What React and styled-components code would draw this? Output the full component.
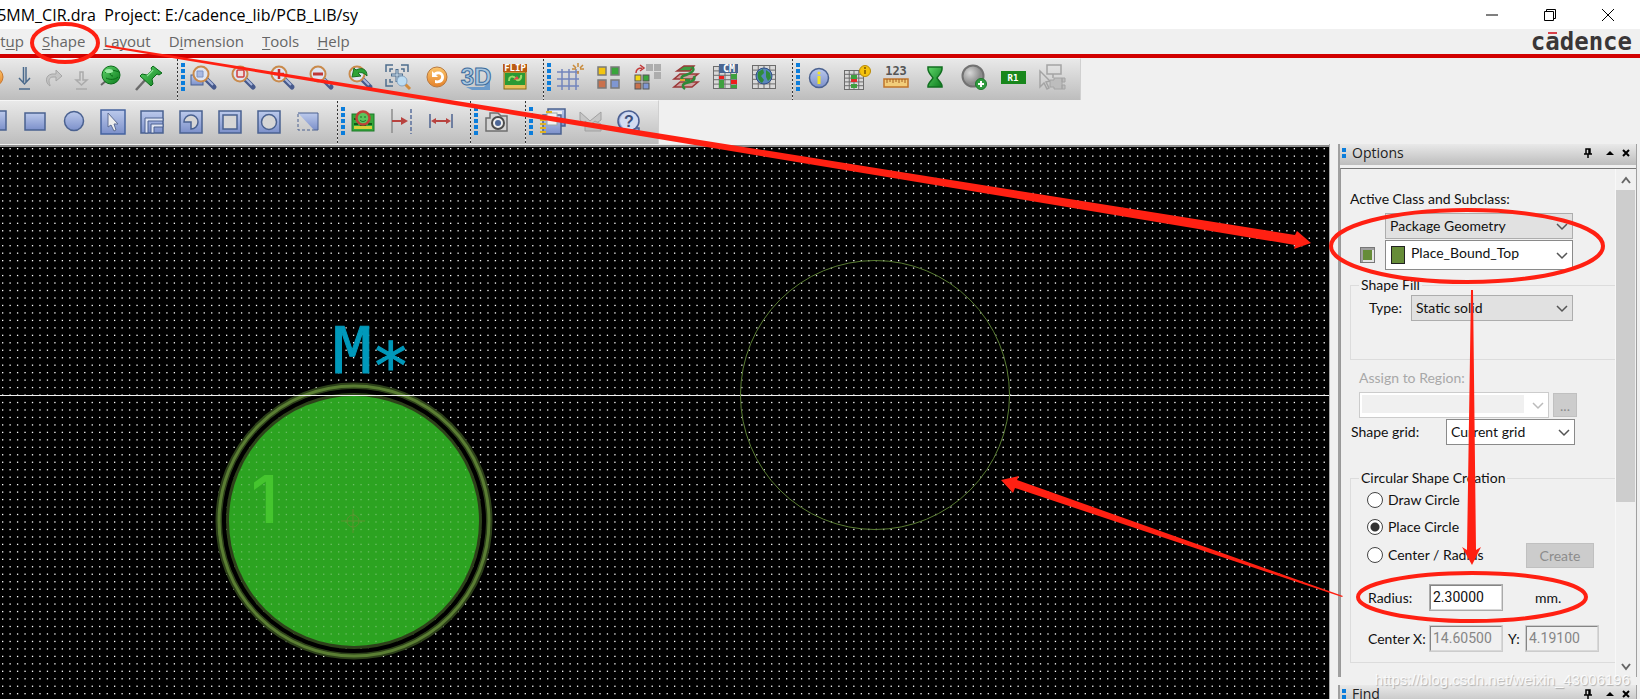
import styled, { createGlobalStyle, css } from 'styled-components'

const colors = {
  face: '#f0f0f0',
  mark: '#ff2012',
  brand: '#d20000',
  grip: '#0b7ddb',
  steel: '#4a6190',
  olive: '#668c38',
  line: '#adadad',
}

const barGradient = 'linear-gradient(to bottom, #e9e9e9, #bdbdbd)'

const GlobalStyle = createGlobalStyle`
  * {
    box-sizing: border-box;
  }
  body {
    margin: 0;
    background: ${colors.face};
    font-family: 'Lato', 'Liberation Sans', sans-serif;
    font-size: 14px;
    color: #111;
  }
  button, input, select {
    font: inherit;
    color: inherit;
  }
`

const Page = styled.div`
  position: relative;
  display: flex;
  flex-direction: column;
  height: 100vh;
  overflow: hidden;
`

/* ---------- title and menu ---------- */

const TitleBar = styled.header`
  display: flex;
  flex: none;
  align-items: center;
  justify-content: space-between;
  height: 29px;
  background: white;
`

const Title = styled.h1`
  display: flex;
  justify-content: flex-end;
  width: 358px;
  margin: 0;
  overflow: hidden;
  font-family: 'Open Sans', 'Noto Sans', sans-serif;
  font-size: 16px;
  font-weight: 400;
  line-height: 28px;
  white-space: pre;
  color: black;
`

const WindowButtons = styled.div`
  display: flex;
  padding-right: 3px;
`

const WindowButton = styled.button`
  display: grid;
  place-items: center;
  width: 58px;
  height: 28px;
  padding: 0;
  border: 0;
  background: none;
`

const MenuBar = styled.nav`
  display: flex;
  flex: none;
  align-items: center;
  height: 29px;
  padding-right: 8px;
  border-bottom: 4px solid ${colors.brand};
  background: ${colors.face};
`

const MenuItem = styled.button`
  display: flex;
  justify-content: flex-end;
  width: ${({ $width }) => ($width ? `${$width}px` : 'auto')};
  margin: 0 18px 0 0;
  padding: 0 0 2px;
  overflow: hidden;
  border: 0;
  background: none;
  font-family: 'Open Sans', 'Noto Sans', sans-serif;
  font-size: 15px;
  line-height: 22px;
  color: #666;
  u {
    text-underline-offset: 2px;
  }
`

const Logo = styled.div`
  margin-left: auto;
  font-family: 'DejaVu Sans Mono', monospace;
  font-size: 24px;
  font-weight: bold;
  line-height: 24px;
  color: #3a3637;
`

const Barred = styled.span`
  position: relative;
  &::before {
    content: '';
    position: absolute;
    top: 4px;
    left: 3px;
    width: 9px;
    height: 2px;
    background: #d8414a;
  }
`

/* ---------- toolbars ---------- */

const ToolRow = styled.div`
  display: flex;
  flex: none;
  align-self: flex-start;
  align-items: stretch;
  height: ${({ $height }) => $height}px;
  border-top: 1px solid #f6f6f6;
  border-right: 1px solid #d0d0d0;
  background: ${barGradient};
`

const ToolSection = styled.div`
  display: flex;
  align-items: center;
  gap: 13px;
  padding-right: ${({ $lift }) => ($lift ? 15 : 16)}px;
  padding-bottom: ${({ $lift }) => ($lift ? 6 : 2)}px;
`

const TightTools = styled.div`
  display: flex;
  gap: 2px;
  margin-right: -10px;
  padding-right: 0;
`

const Divider = styled.div`
  align-self: stretch;
  width: 2px;
  margin-right: 2px;
  background: repeating-linear-gradient(to bottom, #333 0 2px, #ddd 2px 4px) 0 0 / 1px 100% no-repeat;
`

const Grip = styled.div`
  align-self: flex-start;
  width: 4px;
  height: 30px;
  margin: ${({ $top }) => $top}px 5px 0 0;
  background: repeating-linear-gradient(to bottom, ${colors.grip} 0 4px, transparent 4px 6px);
`

const Tool = styled.button`
  display: flex;
  justify-content: flex-end;
  width: ${({ $width }) => $width || 26}px;
  height: 26px;
  padding: 0;
  overflow: ${({ $width }) => ($width ? 'hidden' : 'visible')};
  border: 0;
  background: none;
  svg {
    flex: none;
    overflow: visible;
  }
`

/* ---------- work area ---------- */

const Workspace = styled.main`
  display: flex;
  flex: 1;
  min-height: 0;
`

const Board = styled.section`
  flex: 1;
  min-width: 0;
  margin-top: 1px;
  border-top: 2px solid #8c8c8c;
  background: black;
  svg {
    display: block;
    width: 100%;
    height: 100%;
  }
`

const Dock = styled.aside`
  display: flex;
  flex: none;
  flex-direction: column;
  gap: 8px;
  width: 311px;
  padding: 0 3px 0 8px;
  border-left: 1px solid #aaa;
`

const Panel = styled.section`
  display: flex;
  flex: 1;
  flex-direction: column;
  gap: 3px;
  min-height: 0;
  border-left: 2px solid #a0a0a0;
  border-right: 1px solid #a0a0a0;
`

const ClosedPanel = styled(Panel)`
  flex: none;
  height: 14px;
  overflow: hidden;
`

const PanelHeader = styled.header`
  display: flex;
  flex: none;
  align-items: center;
  gap: 6px;
  height: 21px;
  padding: 0 5px 3px 2px;
  background: ${barGradient};
`

const PanelGrip = styled.div`
  width: 4px;
  height: 10px;
  background: repeating-linear-gradient(to bottom, ${colors.grip} 0 4px, transparent 4px 6px);
`

const PanelTitle = styled.h2`
  flex: 1;
  margin: 0;
  font-family: 'Open Sans', 'Noto Sans', sans-serif;
  font-size: 14px;
  font-weight: 400;
  line-height: 16px;
  color: #222;
`

const PanelButton = styled.button`
  display: grid;
  place-items: center;
  width: 10px;
  height: 16px;
  margin-left: ${({ $gap }) => $gap || 0}px;
  padding: 0;
  border: 0;
  background: none;
`

const PanelBody = styled.div`
  display: flex;
  flex: 1;
  min-height: 0;
  border-top: 1px solid #777;
  border-left: 1px solid #999;
`

const Form = styled.form`
  display: flex;
  flex: 1;
  flex-direction: column;
  min-width: 0;
  padding: 21px 0 0 9px;
  overflow: hidden;
`

const Scrollbar = styled.div`
  display: flex;
  flex: none;
  flex-direction: column;
  width: 21px;
  padding-right: 1px;
  border-left: 1px solid #f8f8f8;
`

const ScrollButton = styled.button`
  display: grid;
  place-items: center;
  height: 21px;
  padding: 0;
  border: 0;
  background: none;
`

const ScrollTrack = styled.div`
  flex: 1;
`

const ScrollThumb = styled.div`
  height: 67%;
  background: #cdcdcd;
`

const Row = styled.div`
  display: flex;
  align-items: center;
  margin: ${({ $top }) => $top || 0}px 0 0 ${({ $indent }) => $indent || 0}px;
`

const Label = styled.label`
  flex: none;
  width: ${({ $width }) => ($width ? `${$width}px` : 'auto')};
  line-height: 18px;
  white-space: nowrap;
  color: ${({ $muted }) => ($muted ? '#a8a8a8' : '#111')};
`

const SelectBox = styled.div`
  position: relative;
  width: ${({ $width }) => $width}px;
`

const Chevron = styled.svg`
  position: absolute;
  top: 50%;
  right: 5px;
  width: 12px;
  height: 8px;
  margin-top: -3px;
  pointer-events: none;
`

const Swatch = styled.span`
  position: absolute;
  top: 6px;
  left: 6px;
  width: 14px;
  height: 18px;
  border: 1px solid #222;
  background: ${colors.olive};
`

const Select = styled.select`
  appearance: none;
  display: block;
  width: 100%;
  height: ${({ $tall }) => ($tall ? 30 : 26)}px;
  padding: ${({ $tall }) => ($tall ? '0 20px 5px 25px' : '0 20px 1px 4px')};
  border: 1px solid ${colors.line};
  border-radius: 0;
  background: #e1e1e1;
  ${({ $white }) =>
    $white &&
    css`
      border-color: #8a8a8a;
      background: white;
    `}
  &:disabled {
    border: 1px solid #ccc;
    background: linear-gradient(${colors.face}, ${colors.face}) 2px 2px / 162px 18px no-repeat white;
    opacity: 1;
  }
`

const LayerButton = styled.button`
  width: 15px;
  height: 16px;
  margin-right: 10px;
  padding: 0;
  border: 1px solid #777;
  background: ${colors.olive};
  box-shadow: inset 2px 2px #a0a0a0, inset -2px -2px #e4e4e4;
`

const Group = styled.fieldset`
  display: flex;
  flex-direction: column;
  min-width: 0;
  height: ${({ $height }) => $height}px;
  margin: ${({ $top }) => $top}px 0 0 0;
  padding: 0 0 0 8px;
  border: 1px solid #dcdcdc;
  border-right: 0;
`

const Legend = styled.legend`
  padding: 0 2px;
  line-height: 18px;
`

const RadioRow = styled(Row)`
  height: 20px;
`

const Radio = styled.input`
  appearance: none;
  width: 16px;
  height: 16px;
  margin: 0 5px 0 8px;
  border: 1px solid #444;
  border-radius: 50%;
  background: white;
  &:checked {
    background: radial-gradient(circle, #333 0 4px, white 5px);
  }
`

const GreyButton = styled.button`
  width: ${({ $width }) => $width}px;
  height: ${({ $width }) => ($width > 30 ? 25 : 24)}px;
  margin-left: ${({ $auto }) => ($auto ? 'auto' : '4px')};
  margin-right: ${({ $auto }) => ($auto ? '21px' : '0')};
  padding: 0;
  border: 1px solid #c0c0c0;
  background: #cccccc;
  &:disabled {
    color: #8c8c8c;
  }
`

const NumberBox = styled.input`
  width: 74px;
  height: 27px;
  padding: 0 0 1px 2px;
  border: 2px solid #a0a0a0;
  border-color: #858585 #d8d8d8 #d8d8d8 #858585;
  background: white;
  box-shadow: 0 0 0 1px ${colors.face};
  outline: 1px solid #aaa;
  outline-offset: -1px;
  font-family: 'Roboto', 'Liberation Sans', sans-serif;
  &:disabled {
    outline-color: #ccc;
    background: ${colors.face};
    color: #868686;
  }
`

/* ---------- layers over the window ---------- */

const MarkLayer = styled.svg`
  position: absolute;
  top: 0;
  left: 0;
  width: 100%;
  height: 100%;
  pointer-events: none;
`

const Watermark = styled.div`
  position: absolute;
  right: 10px;
  bottom: 9px;
  font-family: 'Liberation Sans', sans-serif;
  font-size: 15px;
  line-height: 20px;
  color: rgba(255, 255, 255, 0.85);
  text-shadow: 1px 1px 1px rgba(0, 0, 0, 0.25);
  pointer-events: none;
`

/* ---------- icons ---------- */

const Gradients = () => (
  <svg width="0" height="0" style={{ position: 'absolute' }} aria-hidden="true">
    <defs>
      <linearGradient id="blue" x1="0" y1="0" x2="0" y2="1">
        <stop offset="0" stopColor="#bccaec" />
        <stop offset="1" stopColor="#7c90ca" />
      </linearGradient>
      <linearGradient id="green" x1="0" y1="0" x2="1" y2="1">
        <stop offset="0" stopColor="#5fd66a" />
        <stop offset="1" stopColor="#0b7a1c" />
      </linearGradient>
      <linearGradient id="orange" x1="0" y1="0" x2="0" y2="1">
        <stop offset="0" stopColor="#fbc66c" />
        <stop offset="1" stopColor="#e5822a" />
      </linearGradient>
      <radialGradient id="silver" cx="0.35" cy="0.35">
        <stop offset="0" stopColor="#d8d8d8" />
        <stop offset="1" stopColor="#8d8d8d" />
      </radialGradient>
    </defs>
  </svg>
)

const box = { fill: 'url(#blue)', stroke: colors.steel, strokeWidth: 1.5 }
const hollow = { fill: '#d6d6d6', stroke: colors.steel, strokeWidth: 1.5 }

const Lens = ({ children, back }) => (
  <>
    {back}
    <path d="M17 16l7 7" stroke="#46598c" strokeWidth="5" strokeLinecap="round" />
    <path d="M17 15l6 6" stroke="#a9b7dc" strokeWidth="2" />
    <circle cx="11" cy="10" r="7.5" fill="#dfe5f2" stroke="#c98a4b" strokeWidth="2" />
    {children}
  </>
)

const TableGrid = ({ x = 1, y = 2, w = 24, h = 23 }) => (
  <>
    <rect x={x} y={y} width={w} height={h} fill="#6c6c6c" />
    {[0, 1, 2, 3].map((c) =>
      [0, 1, 2, 3, 4].map((r) => (
        <rect
          key={`${c}-${r}`}
          x={x + 1 + (c * (w - 1)) / 4}
          y={y + 1 + (r * (h - 1)) / 5}
          width={(w - 1) / 4 - 1}
          height={(h - 1) / 5 - 1}
          fill="#d9d9d9"
        />
      ))
    )}
  </>
)

const icons = {
  undo: (
    <circle cx="10" cy="13" r="9" fill="url(#orange)" stroke="#c87830" />
  ),
  down: (
    <path d="M11.5 3v15M14 3v15M7 14l5.500 6 5.500-6M7 25h11" fill="none" stroke="#4b6a8c" strokeWidth="1.5" />
  ),
  downOff: (
    <path d="M12 8h3v8h4l-5.500 5-5.500-5h4zM8 25h11" fill="none" stroke="#ababab" strokeWidth="1.5" />
  ),
  redo: (
    <path d="M10 22c-5-3-5-11 2-12h4V6l6 6-6 5v-4h-3c-4 0-5 4-3 8z" fill="#c4c4c4" stroke="#a6a6a6" />
  ),
  ball: (
    <>
      <path d="M4 21l6-5" stroke="#666" strokeWidth="2" />
      <ellipse cx="14" cy="11" rx="9" ry="9" fill="url(#green)" stroke="#0a6a18" />
      <path d="M8 9c3-4 9-3 14-1M9 14c4 2 9 2 12-1M15 8c-3 1-2 4 1 4" fill="none" stroke="#0a6a18" />
      <ellipse cx="12" cy="7" rx="4" ry="2" fill="#9be8a2" />
    </>
  ),
  pin: (
    <>
      <path d="M0 26l10-11" stroke="#6b6b6b" strokeWidth="2.500" />
      <path d="M17 2l9 7-3 2-2-1-5 5 1 5-2 2L4 12l2-2 5 1 5-5-1-2z" fill="url(#green)" stroke="#0a6a18" />
      <path d="M17 6l-6 6" stroke="#8fe39a" strokeWidth="1.500" />
    </>
  ),
  zoomWindow: (
    <Lens back={<rect x="1" y="11" width="12" height="10" {...box} strokeWidth="1" />}>
      <path d="M7 7h6v6H7z" fill="#a9b9e2" stroke="#7f93c4" />
    </Lens>
  ),
  zoomFit: (
    <Lens>
      <rect x="8" y="6" width="7" height="7" rx="1" fill="#f1dede" stroke="#d03c3c" strokeWidth="1.500" />
    </Lens>
  ),
  zoomIn: (
    <Lens>
      <path d="M11 5v10M6 10h10" stroke="#c92a2a" strokeWidth="2.500" />
    </Lens>
  ),
  zoomOut: (
    <Lens>
      <path d="M6 10h10" stroke="#c03838" strokeWidth="3" />
    </Lens>
  ),
  zoomBack: (
    <Lens>
      <path d="M21 12c0-7-5-9-11-6L8 4 6 13l9-1-3-3c4-1 6 0 9 3z" fill="#2ea336" stroke="#187022" />
    </Lens>
  ),
  zoomSelect: (
    <>
      <path d="M1 8V1h7M16 1h7v7M1 15v7h7M8 5H5v3M16 5h3v3M5 15v3h3" fill="none" stroke="#4d6d8d" strokeWidth="1.500" />
      <path d="M12 5v13M6 11h12" stroke="#4d6d8d" strokeWidth="3" />
      <path d="M12 6v11M7 11h10" stroke="#d4e4f0" strokeWidth="1" />
      <path d="M20 20l5 5" stroke="#d28b3c" strokeWidth="3" />
      <circle cx="17" cy="17" r="5" fill="#bcdcf2" stroke="#88a6c2" />
    </>
  ),
  restore: (
    <>
      <circle cx="13" cy="13" r="10" fill="url(#orange)" stroke="#b9793f" />
      <path d="M8 7v6h6l-2-2c3-2 6 0 5 3-1 2-3 3-6 2v3c6 1 9-2 9-6 0-5-6-7-10-4z" fill="white" />
    </>
  ),
  threeD: (
    <>
      <path d="M3 23h18l6-7v10H9z" fill="#6b9bcb" />
      <text x="13" y="21" textAnchor="middle" fontFamily="Liberation Sans, sans-serif" fontSize="24" fontWeight="bold" fill="#a9c6df" stroke="#3c6c9c" strokeWidth="1">3D</text>
    </>
  ),
  flip: (
    <>
      <rect x="2" y="8" width="22" height="17" fill="#e8c05a" stroke="#8a6b16" />
      <rect x="3" y="9" width="20" height="12" fill="#2a9a34" />
      <path d="M7 17c0-6 5-5 7-2s6 0 5-4" fill="none" stroke="#9adb6a" strokeWidth="2" />
      <path d="M11 16l4-4 2 3z" fill="#e24848" />
      <rect x="1" y="0" width="24" height="8" fill="#b95a12" />
      <text x="13" y="7" textAnchor="middle" fontFamily="DejaVu Sans Mono, monospace" fontSize="9" fontWeight="bold" fill="#fff">FLIP</text>
    </>
  ),
  grid: (
    <>
      <path d="M6 5v21M13 5v21M20 5v21M1 8h22M1 15h22M1 22h22" stroke="#7385bd" strokeWidth="1.500" />
      <path d="M22 -1v4M17 1l3 3M27 1l-3 3M16 5h4M24 5h4M22 7v3" stroke="#c98a3a" strokeWidth="1.500" />
    </>
  ),
  squares: (
    <>
      <rect x="3" y="3" width="8" height="8" fill="#f2c511" stroke="#7a7a7a" strokeWidth="1.500" />
      <rect x="16" y="3" width="8" height="8" fill="#3aa53c" stroke="#7a7a7a" strokeWidth="1.500" />
      <rect x="3" y="16" width="8" height="8" fill="#c9714c" stroke="#7a7a7a" strokeWidth="1.500" />
      <rect x="16" y="16" width="8" height="8" fill="#7f97d2" stroke="#7a7a7a" strokeWidth="1.500" />
    </>
  ),
  moveSquares: (
    <>
      <path d="M12 0h7v7h-7zM20 0h7v7h-7zM20 8h7v7h-7z" fill="#adadad" />
      <rect x="1" y="11" width="6" height="6" fill="#f2d511" stroke="#555" />
      <rect x="9" y="11" width="6" height="6" fill="#3aa53c" stroke="#555" />
      <rect x="1" y="19" width="6" height="6" fill="#c9714c" stroke="#555" />
      <rect x="9" y="19" width="6" height="6" fill="#7f97d2" stroke="#555" />
      <path d="M2 9c0-4 3-5 6-5M6 1l4 3-4 3" fill="none" stroke="#c23a3a" strokeWidth="1.500" />
    </>
  ),
  layers: (
    <>
      <path d="M7 18h18l-6 5H1z" fill="#d0a0a0" stroke="#9b3838" strokeWidth="1.500" />
      <path d="M7 10h18l-6 5H1z" fill="#d0a0a0" stroke="#9b3838" strokeWidth="1.500" />
      <path d="M11 2h10l-4 5H4z" fill="#3f9d42" stroke="#9b3838" strokeWidth="1.500" />
      <path d="M19 3c4 3-1 6-6 8-5 1-6 4-2 5h6M21 12c2 4-3 6-8 7-4 1-4 4-1 6" fill="none" stroke="#2f8a38" strokeWidth="2.500" />
      <path d="M7 16h5" stroke="#e8a430" strokeWidth="2" />
    </>
  ),
  constraint: (
    <>
      <TableGrid />
      <rect x="7" y="0" width="19" height="9" fill="#4a6590" />
      <text x="17" y="8" textAnchor="middle" fontFamily="DejaVu Sans Mono, monospace" fontSize="10" fontWeight="bold" fill="#fff">CM</text>
      <path d="M7 12h5v3H7zM19 16h6v4h-6z" fill="#ef1c1c" />
      <path d="M7 16h5v8H7zM19 10h6v5h-6zM19 21h6v3h-6z" fill="#3fa03f" />
    </>
  ),
  globe: (
    <>
      <TableGrid y={1} h={24} />
      <circle cx="13" cy="12" r="8" fill="#5a86bd" stroke="#2f4f86" />
      <path d="M7 8l5-3 1 4-3 3 3 4-2 3c-4-2-5-6-4-11zM15 6l4 3 1 5-3 3-2-4z" fill="#2f8c3a" />
    </>
  ),
  info: (
    <>
      <circle cx="14" cy="14" r="9.500" {...box} />
      <path d="M14 12v8" stroke="#f2e422" strokeWidth="3" />
      <circle cx="14" cy="9" r="1.500" fill="#f2e422" />
    </>
  ),
  report: (
    <>
      <TableGrid x={0} y={6} w={20} h={20} />
      <path d="M7 11h6v4H7zM7 20h6v4H7z" fill="#3fa03f" />
      <path d="M7 15h6v3H7z" fill="#e22a2a" />
      <circle cx="21" cy="7" r="5.500" fill="#f4c20d" stroke="#b98a08" />
      <path d="M21 6v4M21 3v2" stroke="#7a5600" strokeWidth="1.500" />
    </>
  ),
  measure: (
    <>
      <text x="13" y="11" textAnchor="middle" fontFamily="DejaVu Sans Mono, monospace" fontSize="12" fontWeight="bold" fill="#555">123</text>
      <rect x="1" y="15" width="24" height="8" fill="#f2cd7a" stroke="#c0742a" strokeWidth="1.500" />
      <path d="M4 15v4M7 15v3M10 15v4M13 15v3M16 15v4M19 15v3M22 15v4" stroke="#a45f20" />
    </>
  ),
  hourglass: (
    <path d="M6 3h14v2c0 4-4 7-5 9 1 2 5 5 5 8v1H6v-1c0-3 4-6 5-8-1-2-5-5-5-9z" fill="url(#green)" stroke="#126e20" strokeWidth="1.500" />
  ),
  addCircle: (
    <>
      <circle cx="12" cy="12" r="10.500" fill="url(#silver)" stroke="#727272" strokeWidth="2" />
      <circle cx="20" cy="20" r="5.500" fill="#2f9c3e" stroke="#1d7a2c" />
      <path d="M20 17v6M17 20h6" stroke="white" strokeWidth="2" />
    </>
  ),
  refdes: (
    <>
      <rect x="1" y="7" width="25" height="13" fill="#18871c" />
      <text x="13" y="17" textAnchor="middle" fontFamily="DejaVu Sans Mono, monospace" fontSize="9" fontWeight="bold" fill="#fff">R1</text>
    </>
  ),
  terminal: (
    <>
      <path d="M8 1h14v9H8zM14 10v4M1 7v16l4-4 3 6 2-1-3-6 4-1z" fill="none" stroke="#a4a4a4" strokeWidth="1.500" />
      <path d="M11 16h4v-2h8v11h-8v-2h-4zM23 14h3v4h-3zM23 21h3v4h-3z" fill="#bdbdbd" stroke="#a4a4a4" />
    </>
  ),
  rectCut: <rect x="3" y="2" width="20" height="19" {...box} />,
  rect: <rect x="3" y="4" width="20" height="17" {...box} />,
  circle: <circle cx="13" cy="12" r="9.500" {...box} />,
  pick: (
    <>
      <rect x="1" y="1" width="24" height="24" {...box} stroke="#45639f" />
      <path d="M8 4v14l3-2 3 6 2-1-2-6h4z" fill="#eee" stroke="#5c6c94" />
    </>
  ),
  bend: (
    <>
      <rect x="2" y="2" width="22" height="22" {...box} />
      <path d="M6 24V9h18v3H9v12zM12 24v-9h12v3h-9v6z" fill="#dfe5f2" stroke={colors.steel} />
    </>
  ),
  arc: (
    <>
      <rect x="2" y="2" width="22" height="22" {...box} />
      <path d="M6 13a7 7 0 1 1 7 7v-7z" {...hollow} />
    </>
  ),
  square: (
    <>
      <rect x="2" y="2" width="22" height="22" {...box} />
      <rect x="6" y="6" width="14" height="14" {...hollow} />
    </>
  ),
  ring: (
    <>
      <rect x="2" y="2" width="22" height="22" {...box} />
      <circle cx="13" cy="13" r="7.500" {...hollow} />
    </>
  ),
  chamfer: (
    <>
      <path d="M3 4h20v17h-4z" {...box} stroke="none" />
      <path d="M3 4h20v17h-5" fill="none" stroke={colors.steel} />
      <path d="M3 5v16h15" fill="none" stroke={colors.steel} strokeDasharray="3 2" />
    </>
  ),
  board: (
    <>
      <rect x="2" y="5" width="22" height="17" fill="#35a83b" stroke="#1d7a28" />
      <path d="M4 17h18v3H4z" fill="#d8d03a" />
      <path d="M4 15h4M10 16h6M18 15h4M4 10h2" stroke="#0e5d18" strokeWidth="2" />
      <circle cx="13" cy="9" r="6.500" fill="#5cc45c" stroke="#bf4438" strokeWidth="2.500" />
      <path d="M10 8h2M14 8h2M10 11c2 2 4 2 6 0" fill="none" stroke="#176f22" />
    </>
  ),
  spacing: (
    <>
      <path d="M3 0v24" stroke="#8d8d8d" strokeWidth="1.500" />
      <path d="M22 0v25" stroke="#5a6f9c" strokeWidth="1.500" strokeDasharray="4 2" />
      <path d="M3 12h11" stroke="#b8433f" strokeWidth="2" />
      <path d="M12 8l7 4-7 4z" fill="#b8433f" />
    </>
  ),
  width: (
    <>
      <path d="M2 5v14M24 5v14" stroke="#4d6390" strokeWidth="1.500" />
      <path d="M7 12h12" stroke="#b8433f" strokeWidth="2" />
      <path d="M8 9l-5 3 5 3zM18 9l5 3-5 3z" fill="#b8433f" />
    </>
  ),
  camera: (
    <>
      <path d="M3 9h4V4h8l3 3h6v15H3z" fill="#d4d4d4" stroke="#6e6e6e" strokeWidth="1.500" />
      <circle cx="15" cy="14" r="6" fill="#eee" stroke="#4c4c4c" strokeWidth="2" />
      <circle cx="15" cy="14" r="3" fill="#4d6797" />
    </>
  ),
  notebook: (
    <>
      <rect x="10" y="0" width="17" height="17" {...box} />
      <rect x="13" y="2" width="11" height="10" fill="#eee" />
      <rect x="5" y="6" width="18" height="19" {...box} />
      <rect x="9" y="4" width="10" height="12" fill="#f2f2f2" stroke="#9aa" />
      <path d="M2 11h6M2 15h6M2 19h6M2 23h6M8 3h6" stroke="#e0b322" strokeWidth="2" />
    </>
  ),
  envelope: (
    <>
      <path d="M3 3l10 9 11-9v8l-6 4H8l-5-4z" fill="#c6c6c6" stroke="#a0a0a0" />
      <path d="M8 12l5 4 5-4 6 3v7H8z" fill="#bdbdbd" stroke="#a0a0a0" />
    </>
  ),
  help: (
    <>
      <path d="M13 2a10.500 10 0 1 1-1 20 10.500 10 0 0 1 1-20zM15 19h8v6z" {...box} stroke="#4a5f92" />
      <circle cx="13" cy="12" r="9" fill="#d3dcf1" />
      <text x="13" y="18" textAnchor="middle" fontFamily="Liberation Sans, sans-serif" fontSize="16" fontWeight="bold" fill="#3c4f7c">?</text>
    </>
  ),
}

const toolTop = [
  ['zoomWindow', 'zoomFit', 'zoomIn', 'zoomOut', 'zoomBack', 'zoomSelect', 'restore', 'threeD', 'flip'],
  ['grid', 'squares', 'moveSquares', 'layers', 'constraint', 'globe'],
  ['info', 'report', 'measure', 'hourglass', 'addCircle', 'refdes', 'terminal'],
]

const toolBottom = [
  ['board', 'spacing', 'width'],
  ['camera'],
  ['notebook', 'envelope', 'help'],
]

const ToolButton = ({ name, width }) => (
  <Tool type="button" aria-label={name} $width={width}>
    <svg width="26" height="26" viewBox="0 0 26 26" fill="none">
      {icons[name]}
    </svg>
  </Tool>
)

const GrippedTools = ({ names, lift }) => (
  <>
    <Divider />
    <Grip $top={lift ? 4 : 6} />
    <ToolSection $lift={lift}>
      {names.map((name) => (
        <ToolButton key={name} name={name} />
      ))}
    </ToolSection>
  </>
)

const Arrow = ({ color = '#555' }) => (
  <Chevron viewBox="0 0 12 8">
    <path d="M1 1l5 5 5-5" fill="none" stroke={color} strokeWidth="1.500" />
  </Chevron>
)

const Dropdown = ({ id, value, width, swatch, ...rest }) => (
  <SelectBox $width={width}>
    <Select id={id} aria-label={id} defaultValue={value} {...rest}>
      <option>{value}</option>
    </Select>
    {swatch && <Swatch />}
    <Arrow color={rest.disabled ? '#bbb' : '#555'} />
  </SelectBox>
)

const HeaderButtons = () => (
  <>
    <PanelButton type="button" aria-label="Pin">
      <svg width="10" height="10" viewBox="0 0 10 10">
        <path d="M3 1h4v5H3zM6 1v5M1 6h8M5 6v4" fill="none" stroke="black" strokeWidth="1.500" />
      </svg>
    </PanelButton>
    <PanelButton type="button" aria-label="Collapse" $gap={6}>
      <svg width="8" height="4" viewBox="0 0 8 4">
        <path d="M0 4l4-4 4 4z" />
      </svg>
    </PanelButton>
    <PanelButton type="button" aria-label="Close">
      <svg width="8" height="8" viewBox="0 0 8 8">
        <path d="M1 1l6 6M7 1L1 7" stroke="black" strokeWidth="2" />
      </svg>
    </PanelButton>
  </>
)

const steps = Array.from({ length: 15 }, (_, i) => (i * 112) / 15)

const BoardDrawing = () => (
  <svg>
    <defs>
      <pattern id="dots" x="2" y="1" width="112" height="112" patternUnits="userSpaceOnUse">
        {steps.map((x) => steps.map((y) => <rect key={`${x}-${y}`} x={x} y={y} width="1.3" height="1.3" fill="white" />))}
      </pattern>
    </defs>
    <rect width="100%" height="100%" fill="url(#dots)" />
    <circle cx="354" cy="374" r="135" fill="none" stroke="#2d411a" strokeWidth="7" />
    <circle cx="354" cy="374" r="135" fill="none" stroke="#5a7d33" strokeWidth="3" />
    <circle cx="354" cy="374" r="130" fill="none" stroke="black" strokeWidth="4" />
    <circle cx="354" cy="374" r="126" fill="none" stroke="#2d411a" strokeWidth="4" />
    <circle cx="354" cy="374" r="125" fill="#2ca321" />
    <circle cx="354" cy="374" r="124" fill="url(#dots)" opacity="0.3" />
    <path d="M341 374h24M353 362v24" stroke="#5b9230" />
    <circle cx="353" cy="374" r="6" fill="none" stroke="#5b9230" />
    <text x="251" y="376" fontFamily="Inter, sans-serif" fontSize="66" fontWeight="500" fill="#45c52e">1</text>
    <text x="333" y="226" fontFamily="DejaVu Sans Mono, monospace" fontSize="64" fill="#0099bb" stroke="#0099bb" strokeWidth="1">
      M<tspan dy="15">*</tspan>
    </text>
    <path d="M0 248.500h4000" stroke="#f0f0f0" strokeWidth="1" />
    <circle cx="875" cy="248" r="134.500" fill="none" stroke="#5a7d33" />
  </svg>
)

const Marks = () => (
  <MarkLayer>
    <g fill="none" stroke={colors.mark} strokeWidth="4">
      <ellipse cx="65" cy="43" rx="33" ry="19" />
      <ellipse cx="1467" cy="246" rx="136" ry="36" />
      <ellipse cx="1472" cy="597" rx="114" ry="24" />
    </g>
    <g fill={colors.mark}>
      <path d="M106 45l1189 190 2-4 14 12-17 6 1-4L106 47z" />
      <path d="M1471 290h2l3 260 5-3-9 18-10-18 5 3z" />
      <path d="M1343 596L1017 480l2-4-18 4 12 13 2-5 327 109z" />
    </g>
  </MarkLayer>
)

const App = () => (
  <Page>
    <GlobalStyle />
    <Gradients />
    <TitleBar>
      <Title>P5MM_CIR.dra  Project: E:/cadence_lib/PCB_LIB/sy</Title>
      <WindowButtons>
        <WindowButton type="button" aria-label="Minimize">
          <svg width="12" height="12"><path d="M0 6h12" stroke="black" /></svg>
        </WindowButton>
        <WindowButton type="button" aria-label="Restore">
          <svg width="12" height="12"><path d="M.5 2.500h9v9h-9zM2.500 2V.5h9v9H10" fill="none" stroke="black" /></svg>
        </WindowButton>
        <WindowButton type="button" aria-label="Close">
          <svg width="12" height="12"><path d="M0 0l12 12M12 0L0 12" stroke="black" /></svg>
        </WindowButton>
      </WindowButtons>
    </TitleBar>
    <MenuBar>
      <MenuItem type="button" $width={24}><span>Set<u>u</u>p</span></MenuItem>
      <MenuItem type="button"><span><u>S</u>hape</span></MenuItem>
      <MenuItem type="button"><span><u>L</u>ayout</span></MenuItem>
      <MenuItem type="button"><span>D<u>i</u>mension</span></MenuItem>
      <MenuItem type="button"><span><u>T</u>ools</span></MenuItem>
      <MenuItem type="button"><span><u>H</u>elp</span></MenuItem>
      <Logo>c<Barred>a</Barred>dence</Logo>
    </MenuBar>
    <ToolRow $height={42}>
      <ToolSection $lift>
        <TightTools>
          <ToolButton name="undo" width={10} />
          <ToolButton name="down" />
          <ToolButton name="redo" />
          <ToolButton name="downOff" />
        </TightTools>
        <ToolButton name="ball" />
        <ToolButton name="pin" />
      </ToolSection>
      {toolTop.map((names) => (
        <GrippedTools key={names[0]} names={names} lift />
      ))}
    </ToolRow>
    <ToolRow $height={44}>
      <ToolSection>
        <ToolButton name="rectCut" width={9} />
        {['rect', 'circle', 'pick', 'bend', 'arc', 'square', 'ring', 'chamfer'].map((name) => (
          <ToolButton key={name} name={name} />
        ))}
      </ToolSection>
      {toolBottom.map((names) => (
        <GrippedTools key={names[0]} names={names} />
      ))}
    </ToolRow>
    <Workspace>
      <Board>
        <BoardDrawing />
      </Board>
      <Dock>
        <Panel>
          <PanelHeader>
            <PanelGrip />
            <PanelTitle>Options</PanelTitle>
            <HeaderButtons />
          </PanelHeader>
          <PanelBody>
            <Form>
              <Label htmlFor="class">Active Class and Subclass:</Label>
              <Row $top={5} $indent={35}>
                <Dropdown id="class" value="Package Geometry" width={188} />
              </Row>
              <Row $top={1} $indent={10}>
                <LayerButton type="button" aria-label="Layer colour" />
                <Dropdown id="subclass" value="Place_Bound_Top" width={188} swatch $white $tall />
              </Row>
              <Group $height={84} $top={6}>
                <Legend>Shape Fill</Legend>
                <Row $top={1} $indent={10}>
                  <Label htmlFor="fill" $width={42}>Type:</Label>
                  <Dropdown id="fill" value="Static solid" width={162} />
                </Row>
              </Group>
              <Row $top={9} $indent={9}>
                <Label htmlFor="region" $muted>Assign to Region:</Label>
              </Row>
              <Row $top={5} $indent={9}>
                <Dropdown id="region" value="" width={190} disabled />
                <GreyButton type="button" $width={24} disabled>...</GreyButton>
              </Row>
              <Row $top={1} $indent={1}>
                <Label htmlFor="grid" $width={95}>Shape grid:</Label>
                <Dropdown id="grid" value="Current grid" width={129} $white />
              </Row>
              <Group $height={194} $top={24}>
                <Legend>Circular Shape Creation</Legend>
                <RadioRow $top={3}>
                  <Radio type="radio" name="mode" id="draw" />
                  <Label htmlFor="draw">Draw Circle</Label>
                </RadioRow>
                <RadioRow $top={7}>
                  <Radio type="radio" name="mode" id="place" defaultChecked />
                  <Label htmlFor="place">Place Circle</Label>
                </RadioRow>
                <RadioRow $top={8}>
                  <Radio type="radio" name="mode" id="center" />
                  <Label htmlFor="center">Center / Radius</Label>
                  <GreyButton type="button" $width={68} $auto disabled>Create</GreyButton>
                </RadioRow>
                <Row $top={19} $indent={9}>
                  <Label htmlFor="radius" $width={61}>Radius:</Label>
                  <NumberBox id="radius" defaultValue="2.30000" />
                  <Row as="span" $indent={32}>mm.</Row>
                </Row>
                <Row $top={14} $indent={9}>
                  <Label htmlFor="cx" $width={61}>Center X:</Label>
                  <NumberBox id="cx" defaultValue="14.60500" disabled />
                  <Row $indent={5}>
                    <Label htmlFor="cy" $width={17}>Y:</Label>
                    <NumberBox id="cy" defaultValue="4.19100" disabled />
                  </Row>
                </Row>
              </Group>
            </Form>
            <Scrollbar>
              <ScrollButton type="button" aria-label="Scroll up">
                <svg width="10" height="8"><path d="M1 7l4-5 4 5" fill="none" stroke="#666" strokeWidth="2" /></svg>
              </ScrollButton>
              <ScrollTrack>
                <ScrollThumb />
              </ScrollTrack>
              <ScrollButton type="button" aria-label="Scroll down">
                <svg width="10" height="8"><path d="M1 1l4 5 4-5" fill="none" stroke="#666" strokeWidth="2" /></svg>
              </ScrollButton>
            </Scrollbar>
          </PanelBody>
        </Panel>
        <ClosedPanel>
          <PanelHeader>
            <PanelGrip />
            <PanelTitle>Find</PanelTitle>
            <HeaderButtons />
          </PanelHeader>
        </ClosedPanel>
      </Dock>
    </Workspace>
    <Marks />
    <Watermark>https://blog.csdn.net/weixin_43006196</Watermark>
  </Page>
)

export default App
